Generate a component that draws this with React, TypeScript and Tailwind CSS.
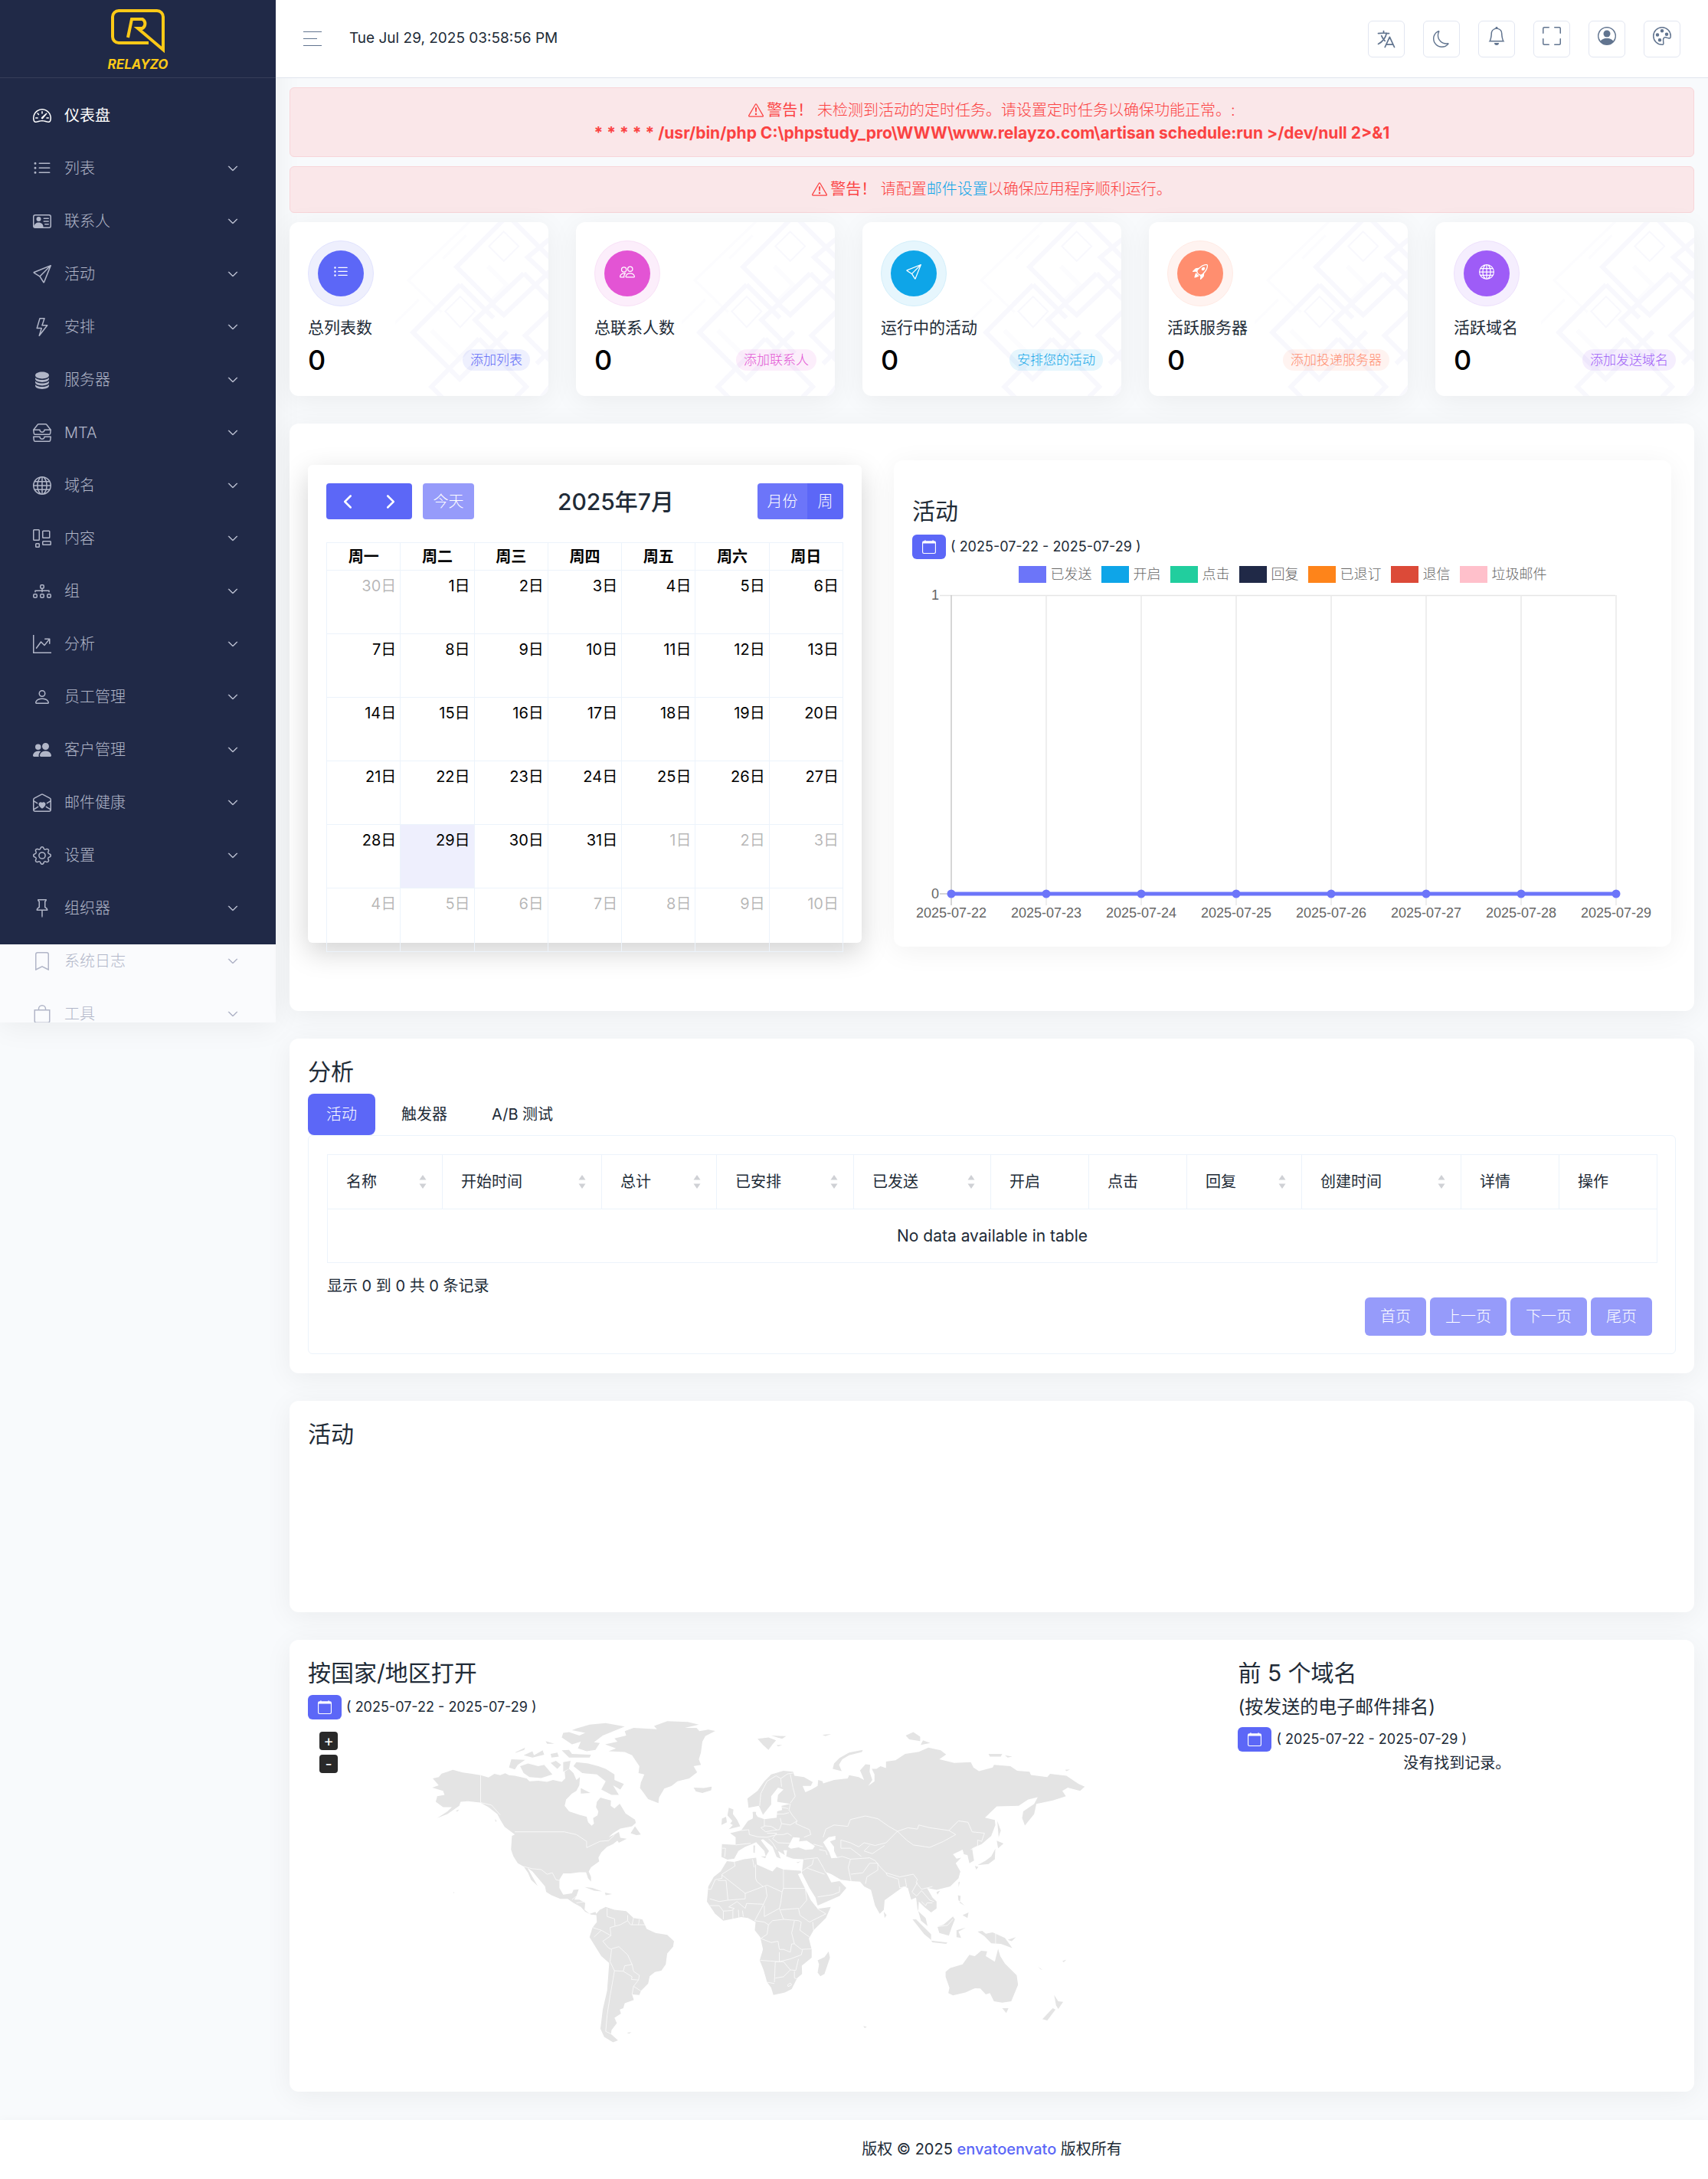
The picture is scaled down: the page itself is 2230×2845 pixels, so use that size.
import type { IconType } from 'react-icons';
import {
  BsBag,
  BsBell,
  BsBookmark,
  BsCalendar,
  BsChevronDown,
  BsChevronLeft,
  BsChevronRight,
  BsDatabaseFill,
  BsDiagram3,
  BsEnvelopeOpenHeart,
  BsExclamationTriangle,
  BsFullscreen,
  BsGear,
  BsGlobe,
  BsGraphUpArrow,
  BsInboxes,
  BsLayoutWtf,
  BsLightning,
  BsListUl,
  BsMoon,
  BsPalette,
  BsPeople,
  BsPeopleFill,
  BsPerson,
  BsPersonCircle,
  BsPersonVcard,
  BsPin,
  BsRocketTakeoff,
  BsSend,
  BsSpeedometer2,
} from 'react-icons/bs';
import { HiOutlineLanguage } from 'react-icons/hi2';

const menu: { label: string; icon: IconType }[] = [
  { label: '仪表盘', icon: BsSpeedometer2 },
  { label: '列表', icon: BsListUl },
  { label: '联系人', icon: BsPersonVcard },
  { label: '活动', icon: BsSend },
  { label: '安排', icon: BsLightning },
  { label: '服务器', icon: BsDatabaseFill },
  { label: 'MTA', icon: BsInboxes },
  { label: '域名', icon: BsGlobe },
  { label: '内容', icon: BsLayoutWtf },
  { label: '组', icon: BsDiagram3 },
  { label: '分析', icon: BsGraphUpArrow },
  { label: '员工管理', icon: BsPerson },
  { label: '客户管理', icon: BsPeopleFill },
  { label: '邮件健康', icon: BsEnvelopeOpenHeart },
  { label: '设置', icon: BsGear },
  { label: '组织器', icon: BsPin },
  { label: '系统日志', icon: BsBookmark },
  { label: '工具', icon: BsBag },
];

const stats = [
  { label: '总列表数', action: '添加列表', icon: BsListUl, ring: 'bg-[#eeeffd] border-[#e1e3fe]', dot: 'bg-[#5c67f7]', badge: 'bg-[#5c67f7]/10 text-[#5c67f7]' },
  { label: '总联系人数', action: '添加联系人', icon: BsPeople, ring: 'bg-[#fceefb] border-[#f9e1f7]', dot: 'bg-[#e354d4]', badge: 'bg-[#e354d4]/10 text-[#e354d4]' },
  { label: '运行中的活动', action: '安排您的活动', icon: BsSend, ring: 'bg-[#e6f6fd] border-[#d3effb]', dot: 'bg-[#0ea5e8]', badge: 'bg-[#0ea5e8]/10 text-[#0ea5e8]' },
  { label: '活跃服务器', action: '添加投递服务器', icon: BsRocketTakeoff, ring: 'bg-[#fff3f0] border-[#ffeae4]', dot: 'bg-[#ff8e6f]', badge: 'bg-[#ff8e6f]/10 text-[#ff8e6f]' },
  { label: '活跃域名', action: '添加发送域名', icon: BsGlobe, ring: 'bg-[#f5eefe] border-[#eee1fd]', dot: 'bg-[#9e5cf7]', badge: 'bg-[#9e5cf7]/10 text-[#9e5cf7]' },
];

const weekdays = ['周一', '周二', '周三', '周四', '周五', '周六', '周日'];

// 2025-06-30 is the Monday that opens the July grid
const days = Array.from({ length: 42 }, (_, i) => {
  if (i === 0) return { day: 30, muted: true };
  if (i <= 31) return { day: i, muted: false };
  return { day: i - 31, muted: true };
});
const weeks = Array.from({ length: 6 }, (_, i) => days.slice(i * 7, i * 7 + 7));

const legend = [
  { label: '已发送', color: 'bg-[#6c75f9]' },
  { label: '开启', color: 'bg-[#0ea5e8]' },
  { label: '点击', color: 'bg-[#21ce9e]' },
  { label: '回复', color: 'bg-[#202947]' },
  { label: '已退订', color: 'bg-[#fe841a]' },
  { label: '退信', color: 'bg-[#dc4a38]' },
  { label: '垃圾邮件', color: 'bg-[#ffc0cb]' },
];

const columns = [
  { label: '名称', sortable: true, width: 'w-[150px]' },
  { label: '开始时间', sortable: true, width: 'w-[208px]' },
  { label: '总计', sortable: true, width: 'w-[150px]' },
  { label: '已安排', sortable: true, width: 'w-[179px]' },
  { label: '已发送', sortable: true, width: 'w-[179px]' },
  { label: '开启', sortable: false, width: 'w-[128px]' },
  { label: '点击', sortable: false, width: 'w-[128px]' },
  { label: '回复', sortable: true, width: 'w-[150px]' },
  { label: '创建时间', sortable: true, width: 'w-[208px]' },
  { label: '详情', sortable: false, width: 'w-[128px]' },
  { label: '操作', sortable: false, width: 'w-[128px]' },
];

const cardShadow = 'shadow-[0_6px_36px_rgba(0,0,0,0.06)]';

function Logo() {
  return (
    <a href="#" className="flex flex-col items-center text-[#fcc917]">
      <svg viewBox="0 0 70 58" className="h-[58px] w-[70px]" fill="none" stroke="currentColor" strokeWidth="4">
        <path d="M49 44H10a8 8 0 0 1-8-8V10a8 8 0 0 1 8-8h50a8 8 0 0 1 8 8v43L35 25h6a7 7 0 0 0 0-12H27l-5 24" />
      </svg>
      <span className="mt-1 text-[17px] leading-5 font-bold italic">RELAYZO</span>
    </a>
  );
}

function Sidebar() {
  return (
    <aside className="h-[1335px] w-[360px] shrink-0 overflow-hidden bg-[linear-gradient(#202947_1233px,#fafbfd_1233px)] shadow-[0_6px_36px_rgba(0,0,0,0.06)]">
      <div className="flex h-[102px] items-start justify-center border-b border-white/10 pt-3">
        <Logo />
      </div>
      <nav className="pt-3.5">
        {menu.map(({ label, icon: Icon }, i) => (
          <a
            key={label}
            href="#"
            className={`flex h-[69px] items-center pr-[49px] pl-[43px] ${i === 0 ? 'text-white' : 'font-light text-[#b1b6c8]'}`}
          >
            <Icon className="size-6 shrink-0" />
            <span className="ml-[17px] flex-1">{label}</span>
            {i > 0 && <BsChevronDown className="size-3.5 stroke-1" />}
          </a>
        ))}
      </nav>
    </aside>
  );
}

function Header() {
  const box = 'flex size-12 justify-center rounded-md border border-[#e2e6f1] text-[#61748f]';
  const tools = [
    { name: '通知', icon: BsBell },
    { name: '全屏', icon: BsFullscreen },
    { name: '账户', icon: BsPersonCircle },
    { name: '主题', icon: BsPalette },
  ];
  return (
    <header className="flex h-[102px] items-center border-b border-[#dfe4ed] bg-white pr-9 pl-9">
      <button type="button" aria-label="菜单" className="flex w-6 flex-col gap-2 text-[#61748f]">
        <span className="h-px w-6 bg-current" />
        <span className="h-px w-[18px] bg-current" />
        <span className="h-px w-6 bg-current" />
      </button>
      <span className="ml-9 text-[19px]">Tue Jul 29, 2025 03:58:56 PM</span>
      <div className="ml-auto flex gap-6">
        <button type="button" aria-label="语言" className={`${box} items-center`}>
          <HiOutlineLanguage className="size-7" />
        </button>
        <button type="button" aria-label="深色模式" className={`${box} items-center`}>
          <BsMoon className="size-[22px]" />
        </button>
        {tools.map(({ name, icon: Icon }) => (
          <button key={name} type="button" aria-label={name} className={`${box} items-start pt-[7px]`}>
            <Icon className="size-6" />
          </button>
        ))}
      </div>
    </header>
  );
}

function Pattern() {
  return (
    <svg
      viewBox="36 18 600 678"
      preserveAspectRatio="xMaxYMin slice"
      className="absolute inset-y-0 right-0 h-full w-[200px]"
      fill="none"
      stroke="#f8f8fd"
      strokeWidth="18"
      aria-hidden="true"
    >
      <g stroke="#fcfcfe">
        <path d="M345 0 90 245l130 125M130 320 20 430M225 160l90-90" strokeWidth="10" />
        <path d="M400 190l75 75-60 60M180 440l120 120" />
      </g>
      <path d="M470 0 278 193 425 340M495 10l150 150" />
      <path d="M640 85 555 155l90 85" />
      <path d="M540 218 350 400l130 130M540 218l110 110M420 342l42 38 190-180" />
      <path d="M292 262 108 448l182 182 185-185M292 262l130 130" />
      <path d="M365 472 180 660l45 45M365 472l185 188-40 40" />
      <path d="M650 360 545 460l100 100M650 510l-60 60M650 650l-40 50" />
      <path d="M462 55l58 57-58 58-58-58zM292 308l58 58-58 62-58-62z" strokeWidth="6" />
    </svg>
  );
}

function StatCard({ stat }: { stat: (typeof stats)[number] }) {
  const Icon = stat.icon;
  return (
    <div className={`relative overflow-hidden rounded-xl bg-white ${cardShadow}`}>
      <Pattern />
      <div className="relative p-6 pb-[25px]">
        <div className={`flex size-[86px] items-center justify-center rounded-full border ${stat.ring}`}>
          <span className={`flex size-[60px] items-start justify-center rounded-full pt-[18px] text-white ${stat.dot}`}>
            <Icon className="size-5" />
          </span>
        </div>
        <div className="mt-3 text-[21px] leading-8">{stat.label}</div>
        <div className="mt-1 flex h-[44px] items-center justify-between">
          <span className="text-4xl font-medium text-black">0</span>
          <a href="#" className={`rounded-full px-[10px] text-[17px] leading-7 font-light ${stat.badge}`}>
            {stat.action}
          </a>
        </div>
      </div>
    </div>
  );
}

function DateRange() {
  return (
    <div className="flex items-center gap-[6px] text-lg">
      <button type="button" aria-label="选择日期" className="flex h-8 w-11 items-center justify-center rounded-md bg-[#5c67f7] text-white">
        <BsCalendar className="size-[18px]" />
      </button>
      <span>( 2025-07-22 - 2025-07-29 )</span>
    </div>
  );
}

function Calendar() {
  return (
    <div className="h-[624px] w-[723px] rounded-md bg-white p-6 shadow-[0_12px_36px_rgba(0,0,0,0.18)]">
      <div className="flex h-[47px] items-center justify-between">
        <div className="flex gap-[14px] text-white">
          <div className="flex overflow-hidden rounded-sm bg-[#5c67f7]">
            <button type="button" aria-label="上个月" className="flex h-[47px] w-14 items-center justify-center">
              <BsChevronLeft className="size-5 stroke-1" />
            </button>
            <button type="button" aria-label="下个月" className="flex h-[47px] w-14 items-center justify-center">
              <BsChevronRight className="size-5 stroke-1" />
            </button>
          </div>
          <button type="button" disabled className="h-[47px] w-[67px] rounded-sm bg-[#969bfa] font-light">
            今天
          </button>
        </div>
        <h2 className="text-3xl font-medium">2025年7月</h2>
        <div className="flex overflow-hidden rounded-sm font-light text-white">
          <button type="button" className="h-[47px] w-[65px] bg-[#6c75f9]">月份</button>
          <button type="button" className="h-[47px] w-[47px] bg-[#5c67f7]">周</button>
        </div>
      </div>
      <table className="mt-[30px] w-full table-fixed border-collapse text-black">
        <thead>
          <tr className="h-9">
            {weekdays.map((d) => (
              <th key={d} className="border border-[#ecf3fb] leading-7 font-bold">
                {d}
              </th>
            ))}
          </tr>
        </thead>
        <tbody>
          {weeks.map((week, w) => (
            <tr key={w} className="h-[83px]">
              {week.map(({ day, muted }) => (
                <td
                  key={day}
                  className={`border border-[#ecf3fb] px-[5px] pt-1.5 text-right align-top ${day === 29 ? 'bg-[#eeeffd]' : ''}`}
                >
                  <span className={muted ? 'text-black/30' : ''}>{day}日</span>
                </td>
              ))}
            </tr>
          ))}
        </tbody>
      </table>
    </div>
  );
}

function CampaignChart() {
  const xs = Array.from({ length: 8 }, (_, i) => 51 + i * 124);
  return (
    <div className={`h-[635px] min-w-0 flex-1 rounded-xl bg-white px-6 pt-[43px] ${cardShadow}`}>
      <h2 className="text-3xl leading-[46px]">活动</h2>
      <div className="mt-2">
        <DateRange />
      </div>
      <ul className="mt-2 flex h-6 items-center justify-center gap-3 font-['Liberation_Sans','Noto_Sans_CJK_SC',sans-serif] text-lg font-light text-[#666]">
        {legend.map((item) => (
          <li key={item.label} className="flex items-center gap-[6px]">
            <span className={`h-[22px] w-9 ${item.color}`} />
            {item.label}
          </li>
        ))}
      </ul>
      <svg viewBox="0 -4 967 444" className="mt-1 w-full overflow-visible font-['Liberation_Sans',sans-serif] text-lg">
        <path d="M36 7.5H918" stroke="#e5e5e5" strokeWidth="1.5" />
        {xs.map((x, i) => (
          <path key={x} d={`M${x} 7V412`} stroke={i === 0 ? '#c9c9c9' : '#e8e8e8'} strokeWidth="1.5" />
        ))}
        <path d="M36 397H51" stroke="#c9c9c9" strokeWidth="1.5" />
        <path d="M51 397H919" stroke="#6c75f9" strokeWidth="5" />
        <g fill="#666">
          <text x="35" y="13" textAnchor="end">1</text>
          <text x="35" y="403" textAnchor="end">0</text>
          {xs.map((x, i) => (
            <text key={x} x={x} y="428" textAnchor="middle">{`2025-07-${22 + i}`}</text>
          ))}
        </g>
        {xs.map((x) => (
          <circle key={x} cx={x} cy="397" r="5.5" fill="#6c75f9" />
        ))}
      </svg>
    </div>
  );
}

function SortArrows() {
  return (
    <svg viewBox="0 0 10 18" className="h-[18px] w-[10px]" fill="#cfd1d5" aria-hidden="true">
      <path d="M5 0l4.500 6.500h-9zM5 18l4.500-6.500h-9z" />
    </svg>
  );
}

function Analytics() {
  const tabs = ['活动', '触发器', 'A/B 测试'];
  const pages = ['首页', '上一页', '下一页', '尾页'];
  return (
    <section className={`rounded-xl bg-white px-6 pt-5 pb-[25px] ${cardShadow}`}>
      <h2 className="text-3xl leading-[46px]">分析</h2>
      <div role="tablist" className="mt-1.5 flex gap-[10px]">
        {tabs.map((tab, i) => (
          <button
            key={tab}
            type="button"
            role="tab"
            aria-selected={i === 0}
            className={`h-[54px] rounded-lg px-6 ${i === 0 ? 'bg-[#5c67f7] font-light text-white' : ''}`}
          >
            {tab}
          </button>
        ))}
      </div>
      <div className="rounded-md border border-[#ecf3fb] p-6 pb-[23px]">
        <table className="w-full table-fixed border-collapse">
          <thead>
            <tr className="h-[71px]">
              {columns.map((col) => (
                <th key={col.label} className={`border border-[#ecf3fb] pr-5 pl-6 text-left font-normal ${col.width}`}>
                  <span className="flex items-center justify-between whitespace-nowrap">
                    {col.label}
                    {col.sortable && <SortArrows />}
                  </span>
                </th>
              ))}
            </tr>
          </thead>
          <tbody>
            <tr className="h-[70px]">
              <td colSpan={11} className="border border-[#ecf3fb] text-center text-[21px]">
                No data available in table
              </td>
            </tr>
          </tbody>
        </table>
        <div className="mt-[15px] leading-[30px]">显示 0 到 0 共 0 条记录</div>
        <div className="flex justify-end gap-[5px] pr-[6px]">
          {pages.map((page) => (
            <button key={page} type="button" disabled className="h-[50px] rounded-md bg-[#969bfa] px-5 font-light text-white">
              {page}
            </button>
          ))}
        </div>
      </div>
    </section>
  );
}

// land masses west of the Atlantic
const west = [
  'M510 535 530 530 540 517 560 510 578 503 612 513 640 517 673 523 700 531 720 518 740 523 757 516 770 523 790 525 830 535 840 545 870 543 900 547 920 540 950 547 962 535 960 510 975 500 990 515 1000 540 1012 530 1010 560 1000 580 985 590 965 612 960 635 975 655 1010 668 1035 675 1040 695 1052 708 1060 700 1057 680 1072 670 1075 655 1067 640 1070 620 1082 605 1100 610 1118 615 1117 635 1130 645 1148 627 1168 663 1200 685 1203 697 1190 710 1150 718 1125 735 1110 750 1130 740 1145 730 1150 752 1172 755 1145 770 1140 762 1125 775 1105 785 1085 805 1075 825 1078 838 1050 860 1042 875 1050 895 1050 912 1040 900 1033 878 1010 878 980 882 955 882 942 905 942 935 955 960 985 955 990 942 1008 940 1000 965 993 978 1010 978 1030 990 1028 1015 1045 1030 1065 1023 1070 1035 1050 1033 1030 1022 1015 1005 990 990 970 975 945 975 915 962 897 950 893 930 870 900 850 875 833 862 850 895 868 928 845 905 835 880 820 857 800 845 785 820 777 795 780 745 790 740 755 712 740 685 730 665 700 640 672 623 630 618 605 620 600 635 560 665 525 680 560 655 575 640 545 640 520 620 525 600 550 595 545 580 508 568 530 560Z',
  'M1068 1030 1080 1015 1100 1005 1130 1015 1170 1020 1195 1045 1225 1050 1240 1085 1270 1100 1310 1107 1333 1130 1330 1150 1310 1175 1305 1215 1290 1238 1268 1243 1250 1258 1245 1285 1220 1312 1215 1327 1190 1325 1196 1345 1165 1357 1160 1375 1148 1380 1152 1395 1130 1410 1138 1430 1120 1455 1118 1470 1142 1493 1125 1500 1095 1480 1082 1450 1085 1425 1090 1380 1105 1310 1112 1210 1085 1185 1065 1150 1045 1115 1055 1080 1070 1060Z',
  'M1098 410 1140 400 1130 388 1170 378 1165 362 1195 350 1230 352 1275 355 1265 343 1310 325 1380 328 1418 338 1370 350 1410 350 1420 362 1450 356 1474 361 1440 380 1430 400 1425 440 1418 465 1425 485 1400 490 1412 512 1385 535 1345 545 1325 562 1300 572 1282 605 1280 625 1245 610 1228 585 1217 570 1220 550 1232 520 1212 515 1215 490 1190 450 1165 438 1110 435 1135 425Z',
  'M1000 352 1045 338 1100 332 1165 345 1130 360 1090 378 1060 402 1080 405 1065 430 1035 435 1005 425 1015 400 985 410 950 385 955 368 975 365 1010 378 1030 368 985 358Z',
  'M770 495 778 465 825 467 800 485 790 502Z',
  'M808 490 835 480 870 490 890 485 918 520 880 533 840 530 820 515Z',
  'M790 440 825 422 822 430 795 440ZM820 450 850 435 855 450 885 432 890 448 850 458ZM895 398 925 408 900 408ZM912 445 935 440 940 455 915 458ZM950 432 975 430 985 445 1050 448 1045 458 975 458ZM912 478 930 470 948 485 935 500ZM955 475 980 470 975 500 955 510Z',
  'M990 490 1000 475 1040 480 1075 490 1100 500 1130 520 1130 540 1162 555 1150 575 1125 560 1145 595 1120 595 1085 575 1100 545 1070 520 1020 515Z',
  'M1015 570 1048 588 1015 590ZM1400 568 1435 570 1462 565 1460 578 1430 588 1408 582ZM1185 735 1200 710 1220 740 1205 742ZM1028 932 1055 935 1088 948 1060 945ZM1097 952 1122 958 1100 962ZM1172 1465 1188 1463 1180 1468ZM580 950 584 952 581 955ZM722 683 728 690 724 694ZM588 653 600 648 594 656Z',
];

const westBorders = [
  'M673 523V623L710 632 740 668M790 730H958L1000 740 1035 765 1035 788 1080 765 1110 762 1130 742M820 857 850 865 880 868 900 885 918 880 930 905 942 908',
  'M985 978 1000 965M1000 990 1030 985M1045 1030 1050 1025M1105 1010 1105 1040 1130 1048 1132 1075 1115 1080 1118 1110 1090 1130 1110 1155 1120 1160 1115 1205M1055 1080 1085 1090 1060 1115M1085 1090 1118 1110M1132 1075 1150 1070 1175 1055 1175 1035M1175 1055 1185 1070 1235 1070M1195 1045 1190 1070M1215 1050 1212 1070M1120 1158 1145 1150 1175 1180 1190 1215 1165 1220 1160 1240 1130 1238 1115 1205M1160 1240 1190 1260 1188 1270 1212 1272 1195 1295 1220 1312M1190 1215 1195 1240 1215 1255 1212 1272M1195 1295 1190 1325M1130 1238 1125 1270 1115 1330 1105 1400 1100 1460 1120 1470',
];

// Europe, Africa, Asia and Oceania
const east = [
  'M213 608 250 580 275 545 300 520 345 507 380 510 385 525 420 530 452 548 445 562 415 562 425 585 447 575 470 562 472 540 488 545 490 553 530 540 580 535 585 523 620 530 640 540 625 505 645 483 662 485 660 510 670 540 655 562 678 545 678 520 668 500 685 500 700 490 720 497 720 473 755 468 790 445 840 437 875 422 920 432 940 447 915 465 970 478 1030 475 1040 495 1060 508 1110 495 1115 485 1175 490 1200 507 1245 510 1250 522 1310 530 1320 518 1380 525 1410 545 1425 555 1447 565 1430 580 1385 568 1365 580 1378 600 1330 615 1270 628 1262 665 1228 707 1218 680 1222 655 1262 628 1275 603 1240 612 1205 635 1125 637 1082 678 1118 687 1120 705 1105 745 1070 775 1035 790 1042 835 1025 845 1018 815 1005 812 1000 795 965 812 978 828 995 825 975 845 992 875 985 900 955 930 905 942 870 935 890 970 905 985 905 1010 885 1025 860 1005 840 985 838 1020 865 1045 872 1075 848 1055 835 1010 830 970 812 978 800 935 785 930 750 955 715 980 712 1015 697 1030 680 1000 665 942 640 930 625 912 590 910 555 905 520 885 500 877 520 915 550 910 575 935 550 965 470 1000 462 970 440 935 412 880 418 830 380 828 355 820 358 797 345 797 350 815 325 800 335 828 320 822 305 785 270 757 262 760 292 800 280 820 275 800 245 768 230 775 205 785 180 800 165 828 140 832 118 822 120 775 170 778 170 750 150 735 190 725 215 690 232 682 238 655 250 675 275 684 320 678 322 655 340 650 338 635 370 628 322 620 325 595 345 575 325 568 300 600 300 630 270 668 255 635 217 642Z',
  'M138 837 165 840 200 830 245 825 248 850 305 875 320 858 345 868 408 872 410 880 398 885 420 930 445 980 470 1012 518 1005 500 1045 455 1090 438 1120 448 1160 448 1190 412 1220 413 1250 395 1265 375 1305 350 1318 308 1327 300 1300 285 1280 272 1235 258 1200 270 1160 260 1115 240 1090 243 1060 215 1045 190 1042 125 1055 95 1030 65 985 70 930 90 895 115 875Z',
  'M510 1168 515 1190 495 1250 480 1258 470 1245 475 1215 470 1200 495 1188Z',
  'M938 1242 955 1228 1000 1215 1025 1180 1045 1185 1068 1165 1090 1167 1085 1185 1118 1205 1130 1158 1138 1185 1155 1212 1198 1255 1203 1290 1178 1350 1145 1355 1115 1350 1100 1320 1085 1325 1065 1303 1045 1302 1010 1318 965 1328 948 1320 952 1300 938 1260Z',
  'M1145 1375 1168 1375 1160 1393ZM1335 1327 1350 1350 1368 1352 1350 1378 1342 1365ZM1330 1375 1340 1380 1310 1420 1292 1415Z',
  'M145 642 162 648 160 665 175 685 187 710 145 720 160 705 150 700 158 690 140 670ZM120 682 135 675 138 695 118 705Z',
  'M250 390 290 385 318 395 305 410 290 430 270 412ZM300 378 355 380 340 390ZM320 412 340 413 325 418ZM487 375 520 372 498 380Z',
  'M525 500 530 480 550 460 585 440 635 430 632 438 585 450 560 465 548 485 558 508ZM792 378 820 365 845 382 845 398 805 392ZM855 395 882 405 847 412ZM1095 445 1145 445 1140 455 1100 455ZM1155 450 1182 455 1165 458ZM1115 475 1135 475ZM1375 503 1393 502 1380 508Z',
  'M1127 690 1140 725 1132 750ZM1125 762 1150 773 1130 790ZM1120 792 1118 830 1095 848 1055 852 1085 835 1105 820ZM1045 855 1058 858 1050 868ZM985 915 990 912 986 932ZM905 950 918 945 908 960ZM712 1022 722 1035 715 1045Z',
  'M817 1050 830 1050 885 1105 885 1125 860 1105ZM885 1128 945 1135 940 1140 890 1134ZM908 1077 930 1070 965 1040 972 1050 960 1080 950 1110 915 1100ZM978 1090 1012 1080 985 1095 995 1118 978 1115ZM983 962 993 965 990 990 1008 1000 985 980ZM1000 1035 1022 1025 1018 1045ZM1055 1095 1072 1092 1085 1103 1110 1098 1155 1118 1182 1155 1140 1140 1105 1138 1080 1112ZM1165 1125 1195 1115 1180 1130ZM1210 1122 1222 1130ZM1275 1223 1293 1235 1285 1232ZM1365 1203 1380 1197 1370 1207Z',
  'M235 780 241 780 240 808 235 806ZM262 820 282 820 278 827ZM335 838 350 839ZM392 842 408 838 398 844ZM637 1440 650 1443 642 1448ZM232 657 245 657 242 676 234 678Z',
];

const seas = 'M362 785 380 750 405 752 402 765 430 762 460 782 452 794 425 796 400 787 372 792ZM490 768 510 750 535 745 535 758 515 765 530 785 530 800 542 825 520 827 512 805Z';

const eastBorders = [
  'M258 635 262 590 285 545 318 525 335 535 360 518 380 515M335 535 338 565M370 520 380 570 388 600 370 625M370 628 365 650 378 670 395 690 390 700 440 722 445 740 420 750M320 665 345 665 365 660M338 640 362 645M275 684 275 710 262 715 280 730 305 725 330 722 338 700 333 680M190 725 218 722 220 740 250 748 285 750 320 740 345 740 360 735 375 745M170 778 225 772M120 790 133 790 130 822M338 700 370 705 395 690M325 770 370 772M290 755 305 770 320 795M285 735 320 735 305 755 325 770M320 722 300 710 275 708',
  'M490 750 500 720 530 705 580 710 590 685 645 672 690 682 730 710 762 728 720 770 680 780 640 770 620 785 590 770 555 760 555 790 590 790 630 820M762 728 800 715 835 720 840 705 880 715 950 725 975 740 930 765 880 787 820 778 795 760 762 728M950 725 985 690 1020 695 1035 730 1080 735 1070 765 1055 760V782L1030 795M535 825 560 820 590 830 620 828 660 825 680 835 700 860 720 880 770 895 820 885 835 905 830 915 850 940 890 930M590 830 582 860 592 910M592 885 635 880 660 845 690 845M690 845 690 870 650 895 645 920M720 880 725 890 765 903 770 935 795 930 790 900M835 915 815 950 832 965 850 945 880 980 895 985M850 985 865 1000 870 990 890 990M412 875 430 862 495 885M420 830 470 825 490 860 500 880M430 862 450 850 455 830M470 968 525 960 550 950 550 930M475 795 500 800 505 815M455 775 490 785M660 780 640 800 670 810 715 780M908 1077 945 1072 965 1050M1121 1100V1143',
  'M165 840 168 855 120 885 120 900 95 905 80 940H68M120 888 205 955 285 925 340 950 345 935V868M345 937H425M243 850 243 900 248 912 270 930M232 830 238 860M105 908 135 908 142 980 110 985 75 975M142 980 205 975 205 955M75 1000 110 1000 125 1020 155 1018 165 1010 145 1005 175 985 205 1010 210 992 272 995 285 965 280 930M340 950 335 990 330 1010 275 1040 275 1000M160 1015 160 1048M180 1015 182 1045M195 1018 198 1040M125 1020 125 1050M272 995 240 1055 275 1060 290 1070 305 1055 345 1050 330 1010M335 1015 400 1010 405 1035 440 1060 500 1030 470 1012M425 937 430 980 405 1010M455 1090 452 1060M345 1050 400 1055 410 1060 405 1090 440 1115M385 1055 375 1100 385 1140 410 1160 448 1158M290 1070 285 1105 262 1120 300 1135 325 1130 330 1160 345 1160 370 1170 375 1140 385 1140M260 1200 330 1205 330 1170M330 1205 370 1195 410 1180 415 1160M312 1280 315 1205 345 1205 370 1235 390 1237 400 1195M315 1265 345 1260 370 1235M385 1240 385 1265 395 1268M285 1280 312 1285M360 1290 370 1283 375 1290 362 1296Z',
];

function WorldMap() {
  return (
    <svg viewBox="32 114 1215 440" className="h-[440px] w-full" fill="#e4e4e4" role="img" aria-label="世界地图">
      <g transform="scale(0.3827 0.3571)">
        {west.map((d) => <path key={d} d={d} />)}
        {westBorders.map((d) => <path key={d} d={d} fill="none" stroke="#fafafa" strokeWidth="2.500" />)}
      </g>
      <g transform="translate(530 0) scale(0.3571)">
        {east.map((d) => <path key={d} d={d} />)}
        <path d={seas} fill="#fff" />
        {eastBorders.map((d) => <path key={d} d={d} fill="none" stroke="#fafafa" strokeWidth="2.500" />)}
      </g>
    </svg>
  );
}

function Geography() {
  const zoom = 'flex size-6 items-center justify-center rounded-sm bg-[#292929] text-xl leading-none text-white';
  return (
    <section className={`flex h-[590px] rounded-xl bg-white px-6 pt-5 ${cardShadow}`}>
      <div className="w-[68%]">
        <h2 className="text-3xl leading-[46px]">按国家/地区打开</h2>
        <div className="mt-1.5">
          <DateRange />
        </div>
        <div className="relative">
          <WorldMap />
          <div className="absolute top-4 left-[15px] flex flex-col gap-[6px]">
            <button type="button" aria-label="放大" className={zoom}>+</button>
            <button type="button" aria-label="缩小" className={zoom}>-</button>
          </div>
        </div>
      </div>
      <div className="flex-1">
        <h2 className="text-3xl leading-[46px]">前 5 个域名</h2>
        <h3 className="mt-1 text-2xl leading-9">(按发送的电子邮件排名)</h3>
        <div className="mt-2">
          <DateRange />
        </div>
        <p className="text-center leading-[30px]">没有找到记录。</p>
      </div>
    </section>
  );
}

export default function App() {
  return (
    <div className="bg-[#f8fafc] font-[Inter,'Noto_Sans_CJK_SC',sans-serif] text-xl text-[#212b37]">
      <div className="flex">
        <Sidebar />
        <div className="min-w-0 flex-1">
          <Header />
          <main className="flex flex-col gap-9 px-[18px] pt-3 pb-[37px]">
            <div className="flex flex-col gap-3">
              <div role="alert" className="rounded-md border border-[#f8d5d9] bg-[#fae7e9] pt-3.5 pb-[15px] text-center leading-[30px] text-[#fb4242]">
                <p className="font-light">
                  <BsExclamationTriangle className="mr-1 inline size-5 align-[-3px]" />
                  <strong>警告！</strong> 未检测到活动的定时任务。请设置定时任务以确保功能正常。:
                </p>
                <p className="text-[21px] leading-[30px] font-bold">
                  {'* * * * * /usr/bin/php C:\\phpstudy_pro\\WWW\\www.relayzo.com\\artisan schedule:run >/dev/null 2>&1'}
                </p>
              </div>
              <div role="alert" className="rounded-md border border-[#f8d5d9] bg-[#fae7e9] pt-3.5 pb-[15px] text-center leading-[30px] font-light text-[#fb4242]">
                <BsExclamationTriangle className="mr-1 inline size-5 align-[-3px]" />
                <strong>警告！</strong> 请配置
                <a href="#" className="text-[#0ea5e8]">邮件设置</a>
                以确保应用程序顺利运行。
              </div>
              <div className="grid grid-cols-5 gap-9">
                {stats.map((stat) => <StatCard key={stat.label} stat={stat} />)}
              </div>
            </div>

            <section className={`flex h-[767px] gap-[42px] rounded-xl bg-white pr-[30px] pl-6 ${cardShadow}`}>
              <div className="pt-[54px]">
                <Calendar />
              </div>
              <div className="flex min-w-0 flex-1 pt-12">
                <CampaignChart />
              </div>
            </section>

            <Analytics />

            <section className={`h-[276px] rounded-xl bg-white px-6 pt-5 ${cardShadow}`}>
              <h2 className="text-3xl leading-[46px]">活动</h2>
            </section>

            <Geography />
          </main>
        </div>
      </div>
      <footer className="bg-white py-[23px] pl-[360px] text-center leading-[30px] shadow-[0_0_12px_rgba(0,0,0,0.03)]">
        版权 © 2025 <a href="#" className="font-medium text-[#5c67f7]">envatoenvato</a> 版权所有
      </footer>
    </div>
  );
}
